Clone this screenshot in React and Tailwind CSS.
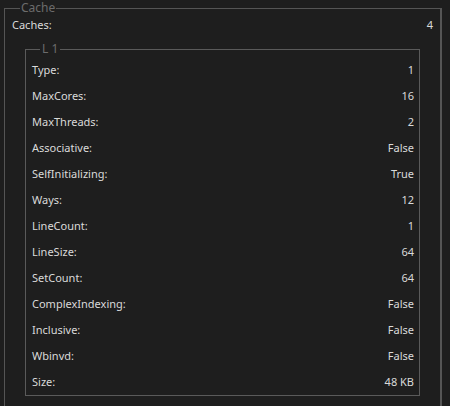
import React from "react";

const rows = [
  ["Type:", "1"],
  ["MaxCores:", "16"],
  ["MaxThreads:", "2"],
  ["Associative:", "False"],
  ["SelfInitializing:", "True"],
  ["Ways:", "12"],
  ["LineCount:", "1"],
  ["LineSize:", "64"],
  ["SetCount:", "64"],
  ["ComplexIndexing:", "False"],
  ["Inclusive:", "False"],
  ["Wbinvd:", "False"],
  ["Size:", "48 KB"],
];

export default function App() {
  return (
    <div
      className="w-[450px] h-[406px] overflow-hidden bg-[#1e1e1e] text-[11px] leading-[16px] text-[#dadada]"
      style={{ fontFamily: '"Noto Sans", sans-serif' }}
    >
      <fieldset className="ml-[4px] w-[438px] border border-[#555555] border-r-2 pl-[7px] pr-[7px] pb-6">
        <legend className="ml-[8px] px-[1px] text-[#6c6c6c] text-[12px]">Cache</legend>
        <div className="flex justify-between h-[16px] mt-[1px]">
          <span>Caches:</span>
          <span>4</span>
        </div>
        <fieldset className="mt-[8px] ml-[13px] mr-[13px] border border-[#5a5a5a] pl-[6px] pr-[5px]">
          <legend className="ml-[8px] px-[2px] text-[#6c6c6c] text-[12px]">L 1</legend>
          {rows.map(([k, v]) => (
            <div key={k} className="flex justify-between items-center h-[26px]">
              <span>{k}</span>
              <span>{v}</span>
            </div>
          ))}
        </fieldset>
      </fieldset>
    </div>
  );
}
